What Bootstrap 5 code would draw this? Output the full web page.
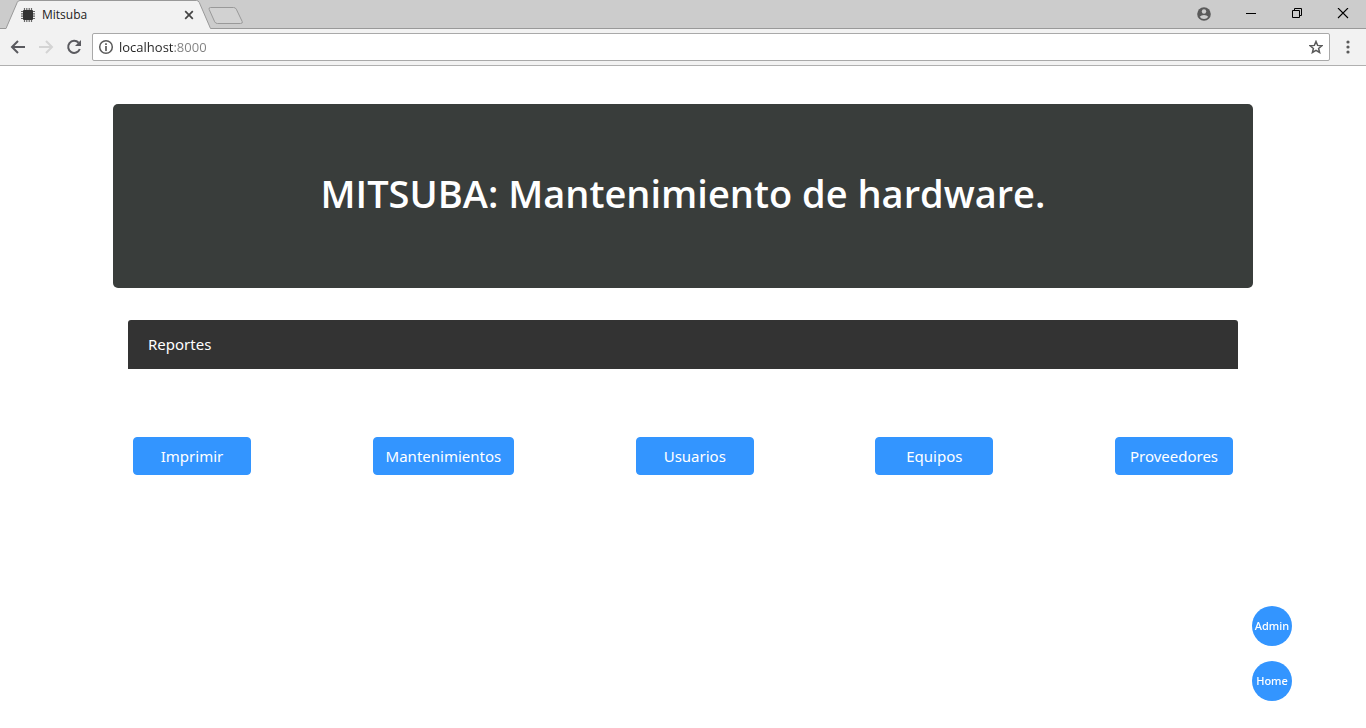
<!DOCTYPE html>
<html lang="es">
<head>
<meta charset="utf-8">
<meta name="viewport" content="width=device-width, initial-scale=1">
<title>Mitsuba</title>
<link href="https://cdn.jsdelivr.net/npm/bootstrap@5.3.0/dist/css/bootstrap.min.css" rel="stylesheet">
<style>
  :root { --ui: "Open Sans", "Noto Sans", sans-serif; --blue: #3395ff; }
  body { font-family: "Noto Sans", "Open Sans", sans-serif; background: #fff; }
  svg { display: block; flex: none; }
  .plain { background: none; border: 0; padding: 0; color: inherit; }
  .browser { font-family: var(--ui); color: #5a5a5a; }
  .tab-strip { height: 29px; background: #ccc; border-bottom: 1px solid #999; }
  .tab-item { width: 202px; height: 29px; margin-left: 6px; margin-bottom: -1px; padding: 0 14px 0 15px; }
  .tab-shape { position: absolute; left: 0; top: 0; }
  .tab-name { font-size: 12px; line-height: 16px; color: #222; padding-left: 7px; }
  .window-controls { gap: 34px; padding-right: 17px; color: #000; }
  .toolbar { height: 37px; background: #f2f2f2; border-bottom: 1px solid #b0b0b0; padding: 0 16px 0 10px; }
  .nav-icons { gap: 12px; margin-right: 10px; }
  .address { height: 28px; background: #fff; border: 1px solid #a9a9a9; border-radius: 2px; padding: 0 6px 0 5px; }
  .address input {
    border: 0; padding: 0; margin-left: 5px; outline: 0; min-width: 0; font-size: 13px; line-height: 18px; color: #222;
    background: linear-gradient(90deg, #222 55px, #808080 55px);
    -webkit-background-clip: text; background-clip: text; -webkit-text-fill-color: transparent;
  }
  .hero { background: #393d3b; border-radius: 5px; padding: 61px 32px 67px; margin-top: 38px; margin-bottom: 32px; }
  .hero h1 { font-family: "Open Sans", sans-serif; font-size: 38px; line-height: 56px; font-weight: 600; }
  .report-panel { margin: 0 15px; }
  .report-title { background: #333; border-radius: 3px 3px 0 0; padding: 12px 20px; line-height: 25px; font-size: 15px; }
  .report-actions { padding: 68px 5px 20px; }
  .btn-report { --bs-btn-color: #fff; --bs-btn-bg: var(--blue); --bs-btn-border-color: var(--blue);
    --bs-btn-hover-color: #fff; --bs-btn-hover-bg: #1a86fa; --bs-btn-border-radius: 4px;
    font-size: 15px; line-height: 24px; min-width: 118px; padding: 6px 12px; }
  .quick-links { right: 74px; bottom: 27px; gap: 15px; }
  .quick-links a { width: 40px; height: 40px; background: var(--blue); font-size: 11px; font-weight: 500; line-height: 16px; }
</style>
</head>
<body>
<header class="browser">
  <div class="tab-strip d-flex justify-content-between">
    <div class="d-flex">
      <div class="tab-item position-relative d-flex align-items-center">
        <svg class="tab-shape" width="206" height="29" viewBox="0 0 206 29"><path d="M0 28.500L11.200 2.500Q12 .5 14 .5H190.500Q192.500 .5 193.300 2.500L204.500 28.500V29H0z" fill="#f2f2f2"/><path d="M0 28.500L11.200 2.500Q12 .5 14 .5H190.500Q192.500 .5 193.300 2.500L204.500 28.500" fill="none" stroke="#999"/></svg>
        <div class="position-relative d-flex align-items-center w-100">
          <svg width="14" height="14" viewBox="0 0 14 14"><path d="M3.500 0v14M5.800 0v14M8.200 0v14M10.500 0v14M0 3.500h14M0 5.800h14M0 8.200h14M0 10.500h14" stroke="#666" stroke-width="1.200"/><rect x="2" y="2" width="10" height="10" rx="1" fill="#333"/></svg>
          <span class="tab-name flex-grow-1">Mitsuba</span>
          <button class="plain" aria-label="Cerrar pestaña"><svg width="10" height="10" viewBox="0 0 10 10"><path d="M1.200 1.200l7.600 7.600M8.800 1.200l-7.600 7.600" stroke="#444" stroke-width="1.700"/></svg></button>
        </div>
      </div>
      <button class="plain align-self-end pb-1" aria-label="Nueva pestaña"><svg width="36" height="18" viewBox="0 0 36 18"><path d="M1.200 3.500Q.4 1.500 2.500 1.500H25.500Q27.500 1.500 28.300 3.200L34.200 15.500Q35 17.500 32.500 17.500H9.500Q7.500 17.500 6.700 15.800z" fill="#d2d2d2" stroke="#999"/></svg></button>
    </div>
    <div class="window-controls d-flex align-items-center">
      <button class="plain" aria-label="Perfil"><svg width="14" height="14" viewBox="0 0 14 14"><circle cx="7" cy="7" r="6.800" fill="#5a5a5a"/><circle cx="7" cy="4.500" r="2.200" fill="#ccc"/><path d="M2.700 9.700Q4.200 7.900 7 7.900T11.300 9.700Q9.800 12.100 7 12.100T2.700 9.700z" fill="#ccc"/></svg></button>
      <button class="plain" aria-label="Minimizar"><svg width="12" height="12" viewBox="0 0 12 12"><path d="M1 5.500h10" stroke="#000"/></svg></button>
      <button class="plain" aria-label="Restaurar"><svg width="12" height="12" viewBox="0 0 12 12"><path d="M1.500 2.500h7v7h-7zM3.500 2.500v-2h7v7h-2" fill="none" stroke="#000"/></svg></button>
      <button class="plain" aria-label="Cerrar"><svg width="12" height="12" viewBox="0 0 12 12"><path d="M1 0l10 10M11 0L1 10" stroke="#000" stroke-width="1.100"/></svg></button>
    </div>
  </div>
  <div class="toolbar d-flex align-items-center">
    <div class="nav-icons d-flex align-items-center">
      <button class="plain" aria-label="Atrás"><svg width="16" height="16" viewBox="0 0 16 16"><path d="M15 8H2.500M8 2L2 8l6 6" fill="none" stroke="#5a5a5f" stroke-width="2"/></svg></button>
      <button class="plain" aria-label="Adelante" disabled><svg width="16" height="16" viewBox="0 0 16 16"><path d="M1 8h12.500M8 2l6 6-6 6" fill="none" stroke="#d4d4d4" stroke-width="2"/></svg></button>
      <button class="plain" aria-label="Recargar"><svg width="16" height="16" viewBox="0 0 16 16"><path d="M12.600 3.800A6 6 0 1 0 13.800 10" fill="none" stroke="#5a5a5f" stroke-width="2"/><path d="M15 1v6H9z" fill="#5a5a5f"/></svg></button>
    </div>
    <div class="address d-flex align-items-center flex-grow-1">
      <svg width="16" height="16" viewBox="0 0 16 16"><circle cx="8" cy="8" r="6.300" fill="none" stroke="#5a5a5a" stroke-width="1.500"/><path d="M8 7v5M8 4.200v1.700" stroke="#5a5a5a" stroke-width="1.700"/></svg>
      <input class="flex-grow-1" type="text" value="localhost:8000" aria-label="Dirección">
      <button class="plain" aria-label="Añadir a favoritos"><svg width="14" height="14" viewBox="0 0 14 14"><path d="M7 1.500l1.600 3.900 4.200.3-3.200 2.700 1 4.100L7 10.300l-3.600 2.200 1-4.100L1.200 5.700l4.200-.3z" fill="none" stroke="#5a5a5a" stroke-width="1.500"/></svg></button>
    </div>
    <button class="plain ms-3" aria-label="Menú"><svg width="4" height="14" viewBox="0 0 4 14"><g fill="#5a5a5a"><circle cx="2" cy="2" r="1.600"/><circle cx="2" cy="7" r="1.600"/><circle cx="2" cy="12" r="1.600"/></g></svg></button>
  </div>
</header>

<main class="container p-0">
  <div class="hero text-center text-white">
    <h1 class="m-0">MITSUBA: Mantenimiento de hardware.</h1>
  </div>
  <section class="report-panel">
    <div class="report-title text-white">Reportes</div>
    <div class="report-actions d-flex flex-wrap justify-content-between gap-3">
      <button class="btn btn-report">Imprimir</button>
      <button class="btn btn-report">Mantenimientos</button>
      <button class="btn btn-report">Usuarios</button>
      <button class="btn btn-report">Equipos</button>
      <button class="btn btn-report">Proveedores</button>
    </div>
  </section>
</main>

<nav class="quick-links position-fixed d-flex flex-column" aria-label="Accesos">
  <a class="rounded-circle d-flex align-items-center justify-content-center text-white text-decoration-none" href="#admin">Admin</a>
  <a class="rounded-circle d-flex align-items-center justify-content-center text-white text-decoration-none" href="#home">Home</a>
</nav>
<script src="https://cdn.jsdelivr.net/npm/bootstrap@5.3.0/dist/js/bootstrap.bundle.min.js"></script>
</body>
</html>
